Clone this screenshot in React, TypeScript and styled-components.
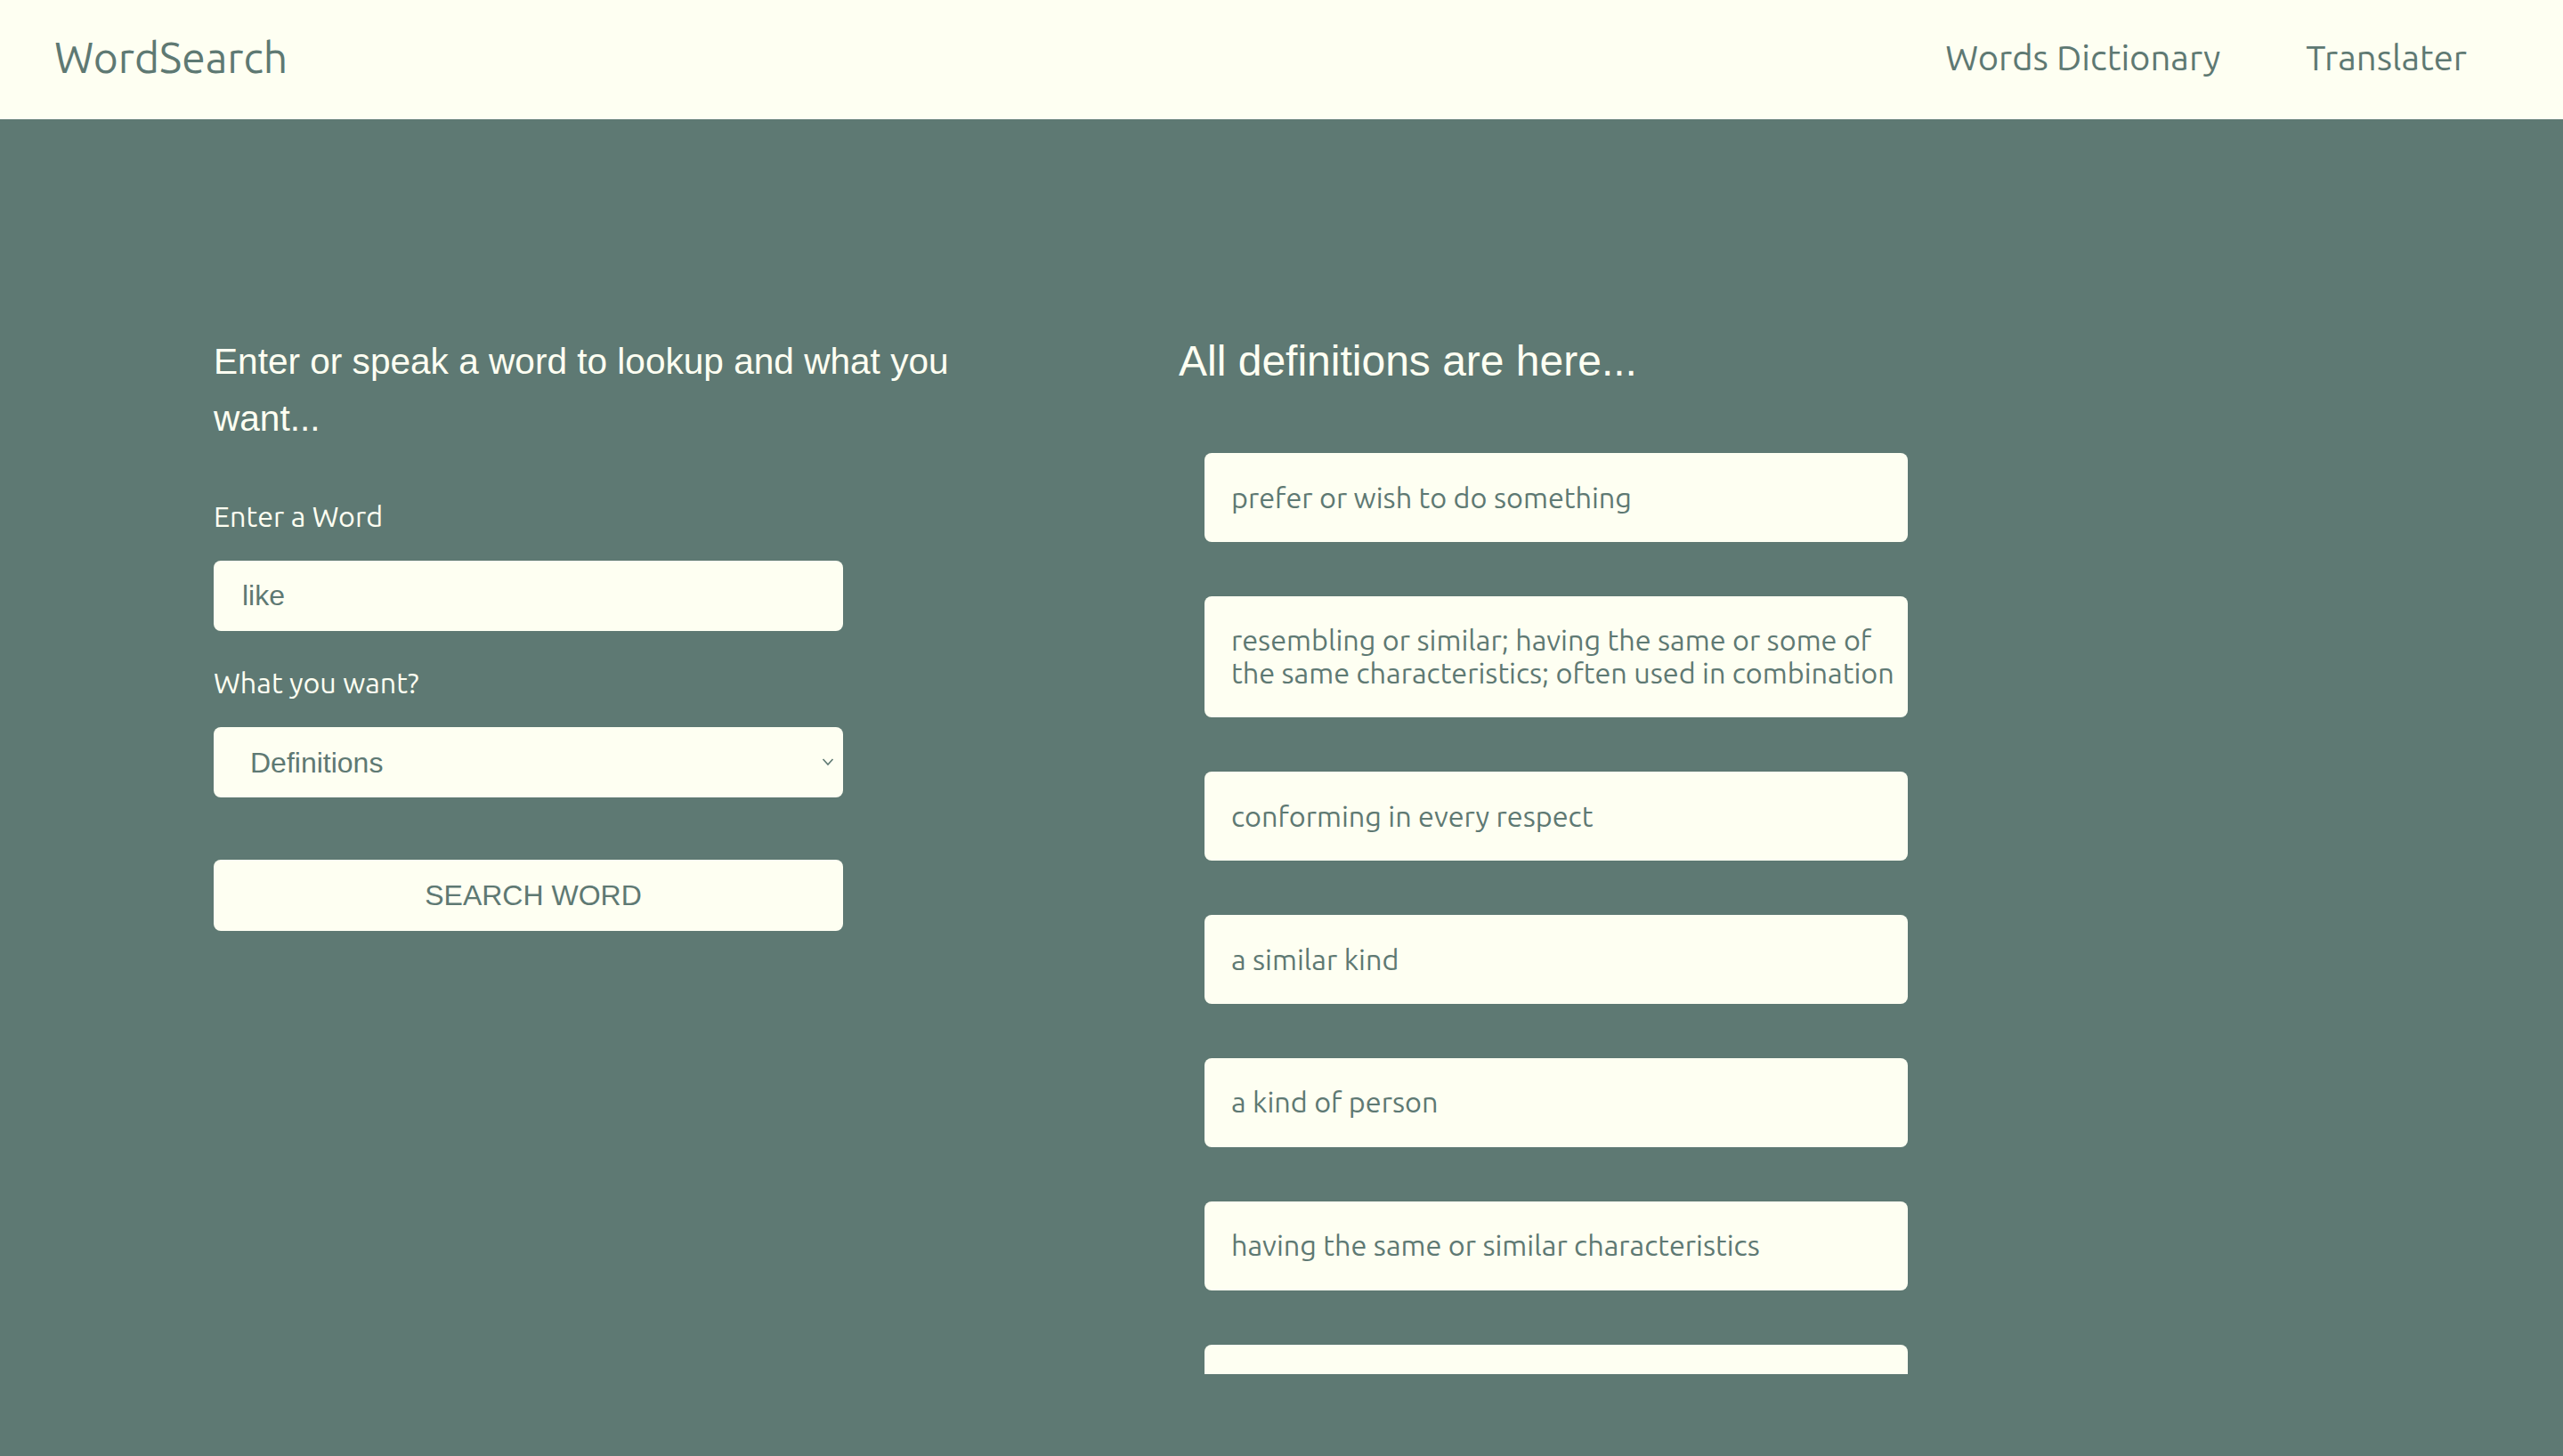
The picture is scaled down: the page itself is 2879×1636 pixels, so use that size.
import React from "react";
import styled, { createGlobalStyle } from "styled-components";

const IVORY = "#FEFFF2";
const TEAL = "#5E7973";
const UI_FONT = `Ubuntu, Lato, "Noto Sans", sans-serif`;
const HEAD_FONT = `Helvetica, "Liberation Sans", Arial, sans-serif`;

const GlobalStyle = createGlobalStyle`
  html, body {
    margin: 0;
    padding: 0;
    background: ${TEAL};
  }
  * { box-sizing: border-box; }
`;

const Page = styled.div`
  min-height: 100vh;
  display: flex;
  flex-direction: column;
  background: ${TEAL};
`;

const Header = styled.header`
  height: 134px;
  background: ${IVORY};
  display: flex;
  align-items: center;
  justify-content: space-between;
  padding: 0 60px 6px 61px;
`;

const Brand = styled.div`
  font-family: ${UI_FONT};
  font-size: 48px;
  color: ${TEAL};
`;

const Nav = styled.nav`
  display: flex;
  align-items: center;
`;

const NavLink = styled.a`
  font-family: ${UI_FONT};
  font-size: 40px;
  color: ${TEAL};
  text-decoration: none;
  padding: 0 48px;
  cursor: pointer;
`;

const Main = styled.main`
  flex: 1;
  display: grid;
  grid-template-columns: 940px 820px;
  column-gap: 144px;
  padding: 240px 0 0 240px;
`;

const Column = styled.section`
  display: flex;
  flex-direction: column;
  align-items: flex-start;
`;

const Heading = styled.h2<{ $size: number }>`
  margin: 0;
  font-family: ${HEAD_FONT};
  font-weight: 400;
  font-size: ${(p) => p.$size}px;
  line-height: 64px;
  color: ${IVORY};
`;

const Label = styled.label<{ $top: number }>`
  display: block;
  margin-top: ${(p) => p.$top}px;
  margin-bottom: 31px;
  font-family: ${UI_FONT};
  font-size: 32.3px;
  line-height: 37px;
  color: ${IVORY};
`;

const fieldBase = `
  width: 707px;
  height: 79px;
  border: none;
  border-radius: 8px;
  background: ${IVORY};
  color: ${TEAL};
  font-family: ${HEAD_FONT};
  font-size: 32px;
  outline: none;
`;

const TextInput = styled.input`
  ${fieldBase}
  padding: 0 32px;
`;

const SelectWrap = styled.div`
  position: relative;
  width: 707px;
`;

const Select = styled.select`
  ${fieldBase}
  appearance: none;
  -webkit-appearance: none;
  padding: 0 41px;
`;

const Chevron = styled.svg`
  position: absolute;
  right: 10px;
  top: 32px;
  width: 14px;
  height: 14px;
  pointer-events: none;
`;

const SearchButton = styled.button`
  ${fieldBase}
  height: 80px;
  margin-top: 70px;
  padding: 0 0 0 11px;
  text-align: center;
  cursor: pointer;
`;

const DefList = styled.ul`
  list-style: none;
  margin: 71px 0 0 0;
  padding: 0 0 0 29px;
  height: 1035px;
  width: 820px;
  overflow-y: auto;
  scrollbar-width: none;
  display: flex;
  flex-direction: column;
  gap: 61px;
  &::-webkit-scrollbar { display: none; }
`;

const DefCard = styled.li`
  flex-shrink: 0;
  width: 790px;
  background: ${IVORY};
  border-radius: 8px;
  padding: 31.5px 10px 31.5px 30px;
  font-family: ${UI_FONT};
  font-size: 32.4px;
  line-height: 36.8px;
  color: ${TEAL};
`;

const definitions = [
  "prefer or wish to do something",
  "resembling or similar; having the same or some of the same characteristics; often used in combination",
  "conforming in every respect",
  "a similar kind",
  "a kind of person",
  "having the same or similar characteristics",
  "equal in amount or value",
  "find enjoyable or agreeable",
  "be fond of",
];

export default function App() {
  return (
    <Page>
      <GlobalStyle />
      <Header>
        <Brand>WordSearch</Brand>
        <Nav>
          <NavLink>Words Dictionary</NavLink>
          <NavLink>Translater</NavLink>
        </Nav>
      </Header>
      <Main>
        <Column>
          <Heading $size={40.6}>Enter or speak a word to lookup and what you want...</Heading>
          <Label $top={60} htmlFor="word">Enter a Word</Label>
          <TextInput id="word" defaultValue="like" />
          <Label $top={40} htmlFor="want">What you want?</Label>
          <SelectWrap>
            <Select id="want" defaultValue="definitions">
              <option value="definitions">Definitions</option>
              <option value="synonyms">Synonyms</option>
              <option value="antonyms">Antonyms</option>
              <option value="examples">Examples</option>
            </Select>
            <Chevron viewBox="0 0 14 14" fill="none" stroke={TEAL} strokeWidth="1.6">
              <polyline points="1.5,4 7,10 12.5,4" />
            </Chevron>
          </SelectWrap>
          <SearchButton>SEARCH WORD</SearchButton>
        </Column>
        <Column>
          <Heading $size={48}>All definitions are here...</Heading>
          <DefList>
            {definitions.map((d) => (
              <DefCard key={d}>{d}</DefCard>
            ))}
          </DefList>
        </Column>
      </Main>
    </Page>
  );
}
